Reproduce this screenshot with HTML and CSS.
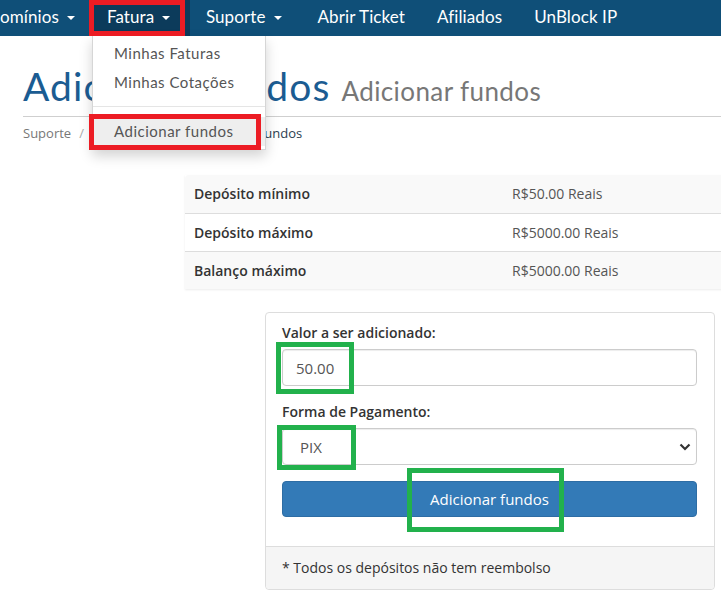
FILE: index.html
```html
<!DOCTYPE html>
<html lang="pt-BR">
<head>
<meta charset="utf-8">
<title>Adicionar fundos</title>
<link rel="stylesheet" href="styles.css">
</head>
<body>
<nav class="topnav">
  <a class="nav-item first">Domínios <span class="caret"></span></a>
  <a class="nav-item active">Fatura <span class="caret"></span></a>
  <a class="nav-item">Suporte <span class="caret"></span></a>
  <a class="nav-item">Abrir Ticket</a>
  <a class="nav-item">Afiliados</a>
  <a class="nav-item">UnBlock IP</a>
</nav>
<div class="red-box red-nav"></div>

<ul class="dropdown">
  <li class="dd-item">Minhas Faturas</li>
  <li class="dd-item">Minhas Cotações</li>
  <li class="dd-divider"></li>
  <li class="dd-item dd-active">Adicionar fundos</li>
</ul>
<div class="red-box red-dd"></div>

<main class="page">
  <header class="page-header">
    <h1 class="title">Adicionar fundos <small class="subtitle">Adicionar fundos</small></h1>
  </header>
  <ol class="breadcrumb">
    <li class="crumb">Suporte</li>
    <li class="sep">/</li>
    <li class="crumb middle">Área do Cliente</li>
    <li class="sep">/</li>
    <li class="crumb current">Adicionar fundos</li>
  </ol>

  <table class="limits">
    <tr class="odd"><td class="lbl">Depósito mínimo</td><td class="val">R$50.00 Reais</td></tr>
    <tr><td class="lbl">Depósito máximo</td><td class="val">R$5000.00 Reais</td></tr>
    <tr class="odd"><td class="lbl">Balanço máximo</td><td class="val">R$5000.00 Reais</td></tr>
  </table>

  <section class="card">
    <div class="card-body">
      <div class="form-group">
        <label class="label">Valor a ser adicionado:</label>
        <div class="input">50.00</div>
      </div>
      <div class="form-group">
        <label class="label">Forma de Pagamento:</label>
        <div class="input select"><span class="select-text">PIX</span>
          <svg class="chev" width="12" height="8" viewBox="0 0 12 8"><path d="M1.5 1.5 L6 6 L10.5 1.5" fill="none" stroke="#333" stroke-width="2.2"/></svg>
        </div>
      </div>
      <button class="btn">Adicionar fundos</button>
    </div>
    <div class="card-footer">* Todos os depósitos não tem reembolso</div>
    <div class="green-box g1"></div>
    <div class="green-box g2"></div>
    <div class="green-box g3"></div>
  </section>
</main>
</body>
</html>
```

FILE: styles.css
```css
* { box-sizing: border-box; }
html, body { margin: 0; padding: 0; }
body {
  width: 721px;
  height: 594px;
  overflow: hidden;
  position: relative;
  background: #fff;
  font-family: "Open Sans", "Noto Sans", sans-serif;
  color: #333;
}

.topnav {
  display: flex;
  height: 36px;
  background: #0f4f78;
  align-items: stretch;
}
.nav-item {
  display: flex;
  align-items: center;
  padding: 0 16px 3px 15px;
  color: #fff;
  font-family: "Lato", sans-serif;
  font-size: 17px;
  letter-spacing: 0.1px;
  white-space: nowrap;
}
.nav-item.first { margin-left: -28px; padding-right: 17px; }
.nav-item.active { background: #0c3b5b; width: 98px; }
.caret {
  display: inline-block;
  width: 0; height: 0;
  margin-left: 8px;
  margin-top: 2px;
  border-left: 4px solid transparent;
  border-right: 4px solid transparent;
  border-top: 4px solid #fff;
}
.nav-item:nth-child(3) { padding-left: 16px; padding-right: 17px; }
.nav-item:nth-child(4) { padding-left: 19px; padding-right: 16px; }
.nav-item:nth-child(5) { padding-left: 16px; padding-right: 16px; }
.nav-item:nth-child(6) { padding-left: 16px; }

.red-box {
  position: absolute;
  border: 5px solid #ec1c24;
  z-index: 5;
}
.red-nav { left: 89px; top: 0; width: 96px; height: 36px; }
.red-dd { left: 89px; top: 114px; width: 172px; height: 36px; }

.dropdown {
  position: absolute;
  left: 92px;
  top: 36px;
  width: 174px;
  margin: 0;
  padding: 3px 0 3px;
  list-style: none;
  background: #fff;
  border: 1px solid #d6d6d6;
  border-top: none;
  box-shadow: 0 6px 12px rgba(0,0,0,.175);
  z-index: 4;
}
.dd-item {
  height: 29px;
  line-height: 29px;
  padding: 0 20px 0 21px;
  font-family: "Lato", sans-serif;
  font-size: 15px;
  letter-spacing: 0.5px;
  color: #555;
  white-space: nowrap;
}
.dd-divider {
  height: 1px;
  margin: 9px 0 10px;
  background: #e5e5e5;
}
.dd-active { background: #eee; }

.page { padding: 0 0 0 23px; }

.page-header {
  margin: 0;
  padding-top: 26px;
  border-bottom: 1px solid #cfcfcf;
  height: 81px;
}
.title {
  margin: 0;
  font-family: "Lato", sans-serif;
  font-weight: 400;
  font-size: 39px;
  letter-spacing: 1.1px;
  line-height: 48px;
  color: #1b5c92;
  white-space: nowrap;
}
.subtitle {
  font-size: 26px;
  color: #777;
  font-weight: 400;
  letter-spacing: 0.4px;
  margin-left: 0;
}

.breadcrumb {
  display: flex;
  list-style: none;
  margin: 0;
  padding: 7px 0 0;
  height: 40px;
  font-size: 13px;
  line-height: 18px;
  color: #777;
}
.sep { padding: 0 8px; color: #aaa; }
.middle { letter-spacing: -0.4px; }
.current { color: #2c3e50; }

.limits {
  margin: 18px 0 0 162px;
  width: 654px;
  border-collapse: collapse;
  font-size: 14px;
  box-shadow: 0 1px 2px rgba(0,0,0,.08);
}
.limits td {
  height: 38px;
  padding: 0 9px;
  border-top: 1px solid #ddd;
  vertical-align: middle;
}
.limits tr:first-child td { border-top: none; }
.limits tr:first-child td:first-child { border-top-left-radius: 4px; }
.limits .odd { background: #f9f9f9; }
.lbl { width: 318px; font-weight: 600; color: #333; }
.val { color: #555; }

.card {
  position: relative;
  margin: 23px 0 0 242px;
  width: 450px;
  border: 1px solid #ddd;
  border-radius: 4px;
}
.card-body { padding: 10px 17px 29px 16px; }
.form-group { margin-bottom: 16px; }
.label {
  display: block;
  font-size: 14px;
  font-weight: 600;
  line-height: 20px;
  margin-bottom: 6px;
  color: #333;
}
.input {
  display: flex;
  align-items: center;
  height: 37px;
  padding: 0 13px;
  border: 1px solid #ccc;
  border-radius: 4px;
  font-size: 15px;
  color: #555;
  box-shadow: inset 0 1px 1px rgba(0,0,0,.075);
}
.select { justify-content: space-between; padding: 0 4px 0 17px; }
.chev { margin-right: 1px; }
.btn {
  display: block;
  width: 100%;
  height: 36px;
  margin-top: 0;
  border: 1px solid #2e6da4;
  border-radius: 4px;
  background: #337ab7;
  color: #fff;
  font-family: "Open Sans", sans-serif;
  font-size: 15px;
}
.card-footer {
  padding: 11px 16px;
  font-size: 14px;
  line-height: 20px;
  background: #f5f5f5;
  border-top: 1px solid #ddd;
  border-radius: 0 0 4px 4px;
  color: #333;
}

.green-box {
  position: absolute;
  border: 5px solid #22b14c;
}
.g1 { left: 10px; top: 29px; width: 78px; height: 52px; }
.g2 { left: 11px; top: 112px; width: 79px; height: 45px; }
.g3 { left: 141px; top: 155px; width: 157px; height: 64px; }
```
